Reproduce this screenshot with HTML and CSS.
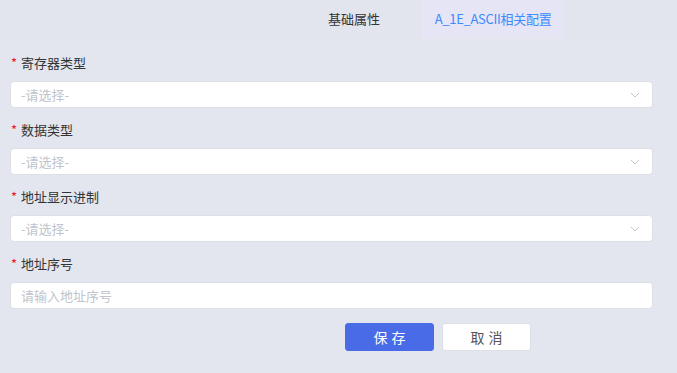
FILE: index.html
```html
<!DOCTYPE html>
<html lang="zh">
<head>
	<meta charset="UTF-8">
	<title>配置</title>
	<link rel="stylesheet" href="styles.css">
</head>
<body>
	<div class="tabs">
		<div class="tab">基础属性</div>
		<div class="tab active">A_1E_ASCII相关配置</div>
	</div>

	<form class="form">
		<div class="item">
			<label><span class="req">*</span>寄存器类型</label>
			<div class="select">
				<span class="ph">-请选择-</span>
				<svg class="arrow" width="10" height="6" viewBox="0 0 10 6"><path d="M1 1l4 4 4-4" fill="none" stroke="#c0c4cc" stroke-width="1"/></svg>
			</div>
		</div>
		<div class="item">
			<label><span class="req">*</span>数据类型</label>
			<div class="select">
				<span class="ph">-请选择-</span>
				<svg class="arrow" width="10" height="6" viewBox="0 0 10 6"><path d="M1 1l4 4 4-4" fill="none" stroke="#c0c4cc" stroke-width="1"/></svg>
			</div>
		</div>
		<div class="item">
			<label><span class="req">*</span>地址显示进制</label>
			<div class="select">
				<span class="ph">-请选择-</span>
				<svg class="arrow" width="10" height="6" viewBox="0 0 10 6"><path d="M1 1l4 4 4-4" fill="none" stroke="#c0c4cc" stroke-width="1"/></svg>
			</div>
		</div>
		<div class="item">
			<label><span class="req">*</span>地址序号</label>
			<input type="text" placeholder="请输入地址序号">
		</div>
		<div class="actions">
			<button type="button" class="btn primary">保存</button>
			<button type="button" class="btn">取消</button>
		</div>
	</form>
</body>
</html>
```

FILE: styles.css
```css
* {
	margin: 0;
	padding: 0;
	box-sizing: border-box;
}

html,
body {
	height: 100%;
}

body {
	background: #e3e6ef;
	font-family: "Noto Sans CJK SC", "Noto Sans", sans-serif;
	font-size: 13px;
	color: #333;
}

.tabs {
	display: flex;
	height: 38px;
	padding-left: 314px;
	gap: 28px;
	background: #e2e5ee;
}

.tab {
	padding: 0 14px;
	line-height: 38px;
	color: #333;
}

.tab.active {
	width: 142px;
	padding: 0;
	text-align: center;
	letter-spacing: -0.3px;
	background: #e6e5f6;
	color: #3a8cff;
}

.form {
	padding: 15px 24px 0 10px;
}

.item {
	margin-bottom: 12px;
}

.item label {
	display: block;
	line-height: 20px;
	margin-bottom: 8px;
	padding-left: 1px;
}

.req {
	color: #f0141e;
	margin-right: 4px;
}

.select,
.item input {
	display: flex;
	align-items: center;
	justify-content: space-between;
	width: 643px;
	height: 27px;
	padding: 0 12px 0 10px;
	background: #fff;
	border: 1px solid #dcdfe6;
	border-radius: 4px;
}

.ph {
	color: #c0c4cc;
}

.item input {
	font-family: inherit;
	font-size: 13px;
	outline: 0;
}

.item input::placeholder {
	color: #c0c4cc;
}

.actions {
	display: flex;
	gap: 8px;
	padding-left: 335px;
	padding-top: 2px;
}

.btn {
	width: 89px;
	height: 28px;
	font-family: inherit;
	font-size: 14px;
	letter-spacing: 4px;
	text-indent: 4px;
	background: #fff;
	color: #555;
	border: 1px solid #dcdfe6;
	border-radius: 3px;
}

.btn.primary {
	background: #4a6be8;
	border-color: #4a6be8;
	color: #fff;
}
```
